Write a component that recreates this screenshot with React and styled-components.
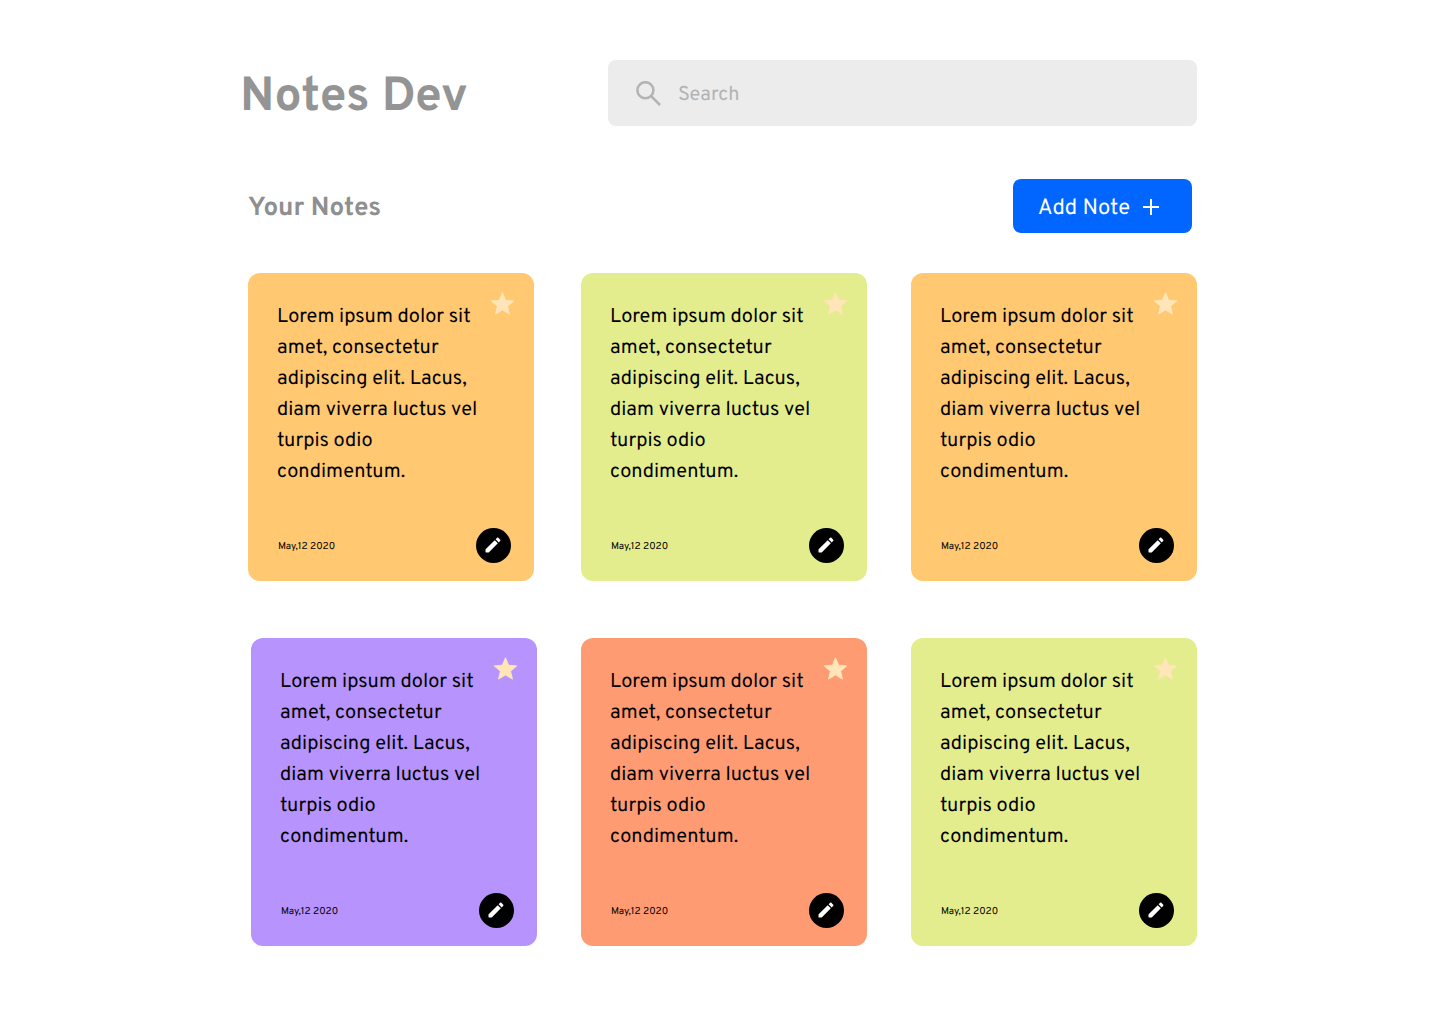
import React, { useState } from "react";
import styled, { createGlobalStyle } from "styled-components";

const GlobalStyle = createGlobalStyle`
  *, *::before, *::after { box-sizing: border-box; }
  body {
    margin: 0;
    background: #ffffff;
    color: #000000;
    font-family: Overpass, Roboto, "Liberation Sans", sans-serif;
    text-rendering: geometricPrecision;
  }
  button, input { font: inherit; text-rendering: inherit; }
`;

const Page = styled.main`
  max-width: 960px;
  margin: 0 auto;
  padding: 60px 3px 78px 0;
`;

const Header = styled.header`
  display: flex;
  align-items: center;
  justify-content: space-between;
  gap: 32px;
`;

const Title = styled.h1`
  margin: 0;
  padding-top: 12px;
  color: #949494;
  font-size: 48px;
  font-weight: 700;
  line-height: 54px;
  white-space: nowrap;
`;

const SearchBox = styled.label`
  display: flex;
  align-items: center;
  flex: 0 1 589px;
  gap: 17px;
  height: 66px;
  padding: 0 28px;
  border-radius: 8px;
  background: #ececec;
  color: #b3b3b3;

  svg { flex: none; }
`;

const SearchInput = styled.input`
  flex: 1;
  min-width: 0;
  padding: 4px 0 0;
  border: 0;
  outline: 0;
  background: transparent;
  color: #555555;
  font-size: 20px;
  line-height: 30px;

  &::placeholder { color: #b3b3b3; opacity: 1; }
`;

const Toolbar = styled.div`
  display: flex;
  align-items: center;
  justify-content: space-between;
  padding: 53px 5px 40px 8px;
`;

const SectionTitle = styled.h2`
  margin: 0;
  padding-top: 6px;
  color: #8f8f8f;
  font-size: 26px;
  font-weight: 700;
  line-height: 32px;
`;

const AddButton = styled.button`
  display: flex;
  align-items: center;
  gap: 13px;
  height: 54px;
  padding: 2px 33px 0 25px;
  border: 0;
  border-radius: 8px;
  background: #0066ff;
  color: #ffffff;
  font-size: 22px;
  line-height: 32px;
  cursor: pointer;
`;

const AddLabel = styled.span`
  padding-top: 6px;
`;

const Notes = styled.section`
  display: grid;
  grid-template-columns: 289fr 286fr 286fr;
  gap: 57px 44px;
  padding-left: 8px;

  @media (max-width: 960px) {
    grid-template-columns: repeat(auto-fill, 286px);
    justify-content: center;
  }
`;

const Card = styled.article`
  display: flex;
  flex-direction: column;
  justify-content: space-between;
  justify-self: ${({ $align }) => $align};
  width: 100%;
  max-width: 286px;
  min-height: 308px;
  padding: 17px 16px 18px 29px;
  border-radius: 12px;
  background: ${({ $color }) => $color};
`;

const CardBody = styled.div`
  display: flex;
  align-items: flex-start;
`;

const NoteText = styled.p`
  flex: 1;
  margin: 12px 0 0;
  font-size: 20px;
  line-height: 31px;
`;

const StarButton = styled.button`
  display: flex;
  padding: 0 2px 0 0;
  border: 0;
  background: none;
  color: #ffe5b8;
  cursor: pointer;
`;

const CardFooter = styled.footer`
  display: flex;
  align-items: center;
  justify-content: space-between;
  padding: 0 7px 0 1px;
`;

const NoteDate = styled.time`
  padding-top: 2px;
  font-size: 10px;
  line-height: 16px;
`;

const EditButton = styled.button`
  display: grid;
  place-items: center;
  width: 35px;
  height: 35px;
  padding: 0 1px 1px 0;
  border: 0;
  border-radius: 50%;
  background: #000000;
  color: #ffffff;
  cursor: pointer;
`;

const SearchIcon = () => (
  <svg width="25" height="25" viewBox="0 0 25 25" fill="none" stroke="currentColor" strokeWidth="2.5" aria-hidden="true">
    <circle cx="9.4" cy="9.2" r="8" />
    <path d="M15 15l9 9" />
  </svg>
);

const PlusIcon = () => (
  <svg width="16" height="16" viewBox="0 0 16 16" fill="currentColor" aria-hidden="true">
    <path d="M7 0h2v7h7v2H9v7H7V9H0V7h7z" />
  </svg>
);

const StarIcon = () => (
  <svg width="27" height="28" viewBox="0 0 24 24" fill="currentColor" stroke="currentColor" strokeWidth="0.8" strokeLinejoin="round" aria-hidden="true">
    <path d="M12 17.27L18.18 21l-1.64-7.03L22 9.24l-7.19-.61L12 2 9.19 8.63 2 9.24l5.46 4.73L5.82 21z" />
  </svg>
);

const PencilIcon = () => (
  <svg width="20" height="20" viewBox="0 0 24 24" fill="currentColor" aria-hidden="true">
    <path d="M3 17.46v3.04c0 .28.22.5.5.5h3.04c.13 0 .26-.05.35-.15L17.81 9.94l-3.75-3.75L3.15 17.1c-.1.1-.15.22-.15.36zM20.71 7.04c.39-.39.39-1.02 0-1.41l-2.34-2.34c-.39-.39-1.02-.39-1.41 0l-1.83 1.83 3.75 3.75 1.83-1.83z" />
  </svg>
);

const text =
  "Lorem ipsum dolor sit amet, consectetur adipiscing elit. Lacus, diam viverra luctus vel turpis odio condimentum.";

const notes = [
  { id: 1, color: "#ffc871" },
  { id: 2, color: "#e3ed8d" },
  { id: 3, color: "#ffc871" },
  { id: 4, color: "#b693fd", align: "end" },
  { id: 5, color: "#ff9b73" },
  { id: 6, color: "#e3ed8d" },
];

function Note({ color, align = "start" }) {
  return (
    <Card $color={color} $align={align}>
      <CardBody>
        <NoteText>{text}</NoteText>
        <StarButton type="button" aria-label="Favourite">
          <StarIcon />
        </StarButton>
      </CardBody>
      <CardFooter>
        <NoteDate dateTime="2020-05-12">May,12 2020</NoteDate>
        <EditButton type="button" aria-label="Edit note">
          <PencilIcon />
        </EditButton>
      </CardFooter>
    </Card>
  );
}

export default function App() {
  const [query, setQuery] = useState("");

  return (
    <>
      <GlobalStyle />
      <Page>
        <Header>
          <Title>Notes Dev</Title>
          <SearchBox>
            <SearchIcon />
            <SearchInput
              type="text"
              aria-label="Search"
              placeholder="Search"
              value={query}
              onChange={(event) => setQuery(event.target.value)}
            />
          </SearchBox>
        </Header>
        <Toolbar>
          <SectionTitle>Your Notes</SectionTitle>
          <AddButton type="button">
            <AddLabel>Add Note</AddLabel>
            <PlusIcon />
          </AddButton>
        </Toolbar>
        <Notes>
          {notes.map((note) => (
            <Note key={note.id} color={note.color} align={note.align} />
          ))}
        </Notes>
      </Page>
    </>
  );
}
